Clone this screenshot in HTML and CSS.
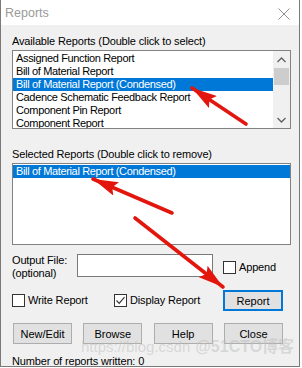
FILE: index.html
```html
<!DOCTYPE html>
<html lang="en">
<head>
  <meta charset="UTF-8" />
  <title>Reports</title>
  <link rel="stylesheet" href="styles.css">
</head>
<body>
  <div class="window">
    <div class="titlebar">
      <span class="title">Reports</span>
      <svg class="close" width="12" height="12" viewBox="0 0 12 12">
        <path d="M0.5 0.5 L11.5 11.5 M11.5 0.5 L0.5 11.5" stroke="#8c8c8c" stroke-width="1" fill="none"/>
      </svg>
    </div>

    <div class="content">
      <div class="label label-first">Available Reports (Double click to select)</div>
      <div class="listbox list-available">
        <ul class="items">
          <li>Assigned Function Report</li>
          <li>Bill of Material Report</li>
          <li class="selected">Bill of Material Report (Condensed)</li>
          <li>Cadence Schematic Feedback Report</li>
          <li>Component Pin Report</li>
          <li>Component Report</li>
        </ul>
        <div class="scrollbar">
          <svg class="arrow-up" width="9" height="6" viewBox="0 0 9 6">
            <path d="M0.5 5 L4.5 1 L8.5 5" stroke="#606060" stroke-width="1.3" fill="none"/>
          </svg>
          <div class="thumb"></div>
          <svg class="arrow-down" width="9" height="6" viewBox="0 0 9 6">
            <path d="M0.5 1 L4.5 5 L8.5 1" stroke="#606060" stroke-width="1.3" fill="none"/>
          </svg>
        </div>
      </div>

      <div class="label label-second">Selected Reports (Double click to remove)</div>
      <div class="listbox list-selected">
        <ul class="items">
          <li class="selected">Bill of Material Report (Condensed)</li>
        </ul>
      </div>

      <div class="output-row">
        <div class="output-label">Output File:<br>(optional)</div>
        <div class="textbox"></div>
        <label class="check check-append"><span class="box"></span>Append</label>
      </div>

      <div class="options-row">
        <label class="check"><span class="box"></span>Write Report</label>
        <label class="check">
          <span class="box">
            <svg width="11" height="11" viewBox="0 0 11 11">
              <path d="M1.5 5.5 L4.2 8.3 L9.5 2.2" stroke="#333" stroke-width="1.2" fill="none"/>
            </svg>
          </span>Display Report</label>
        <button class="btn btn-default">Report</button>
      </div>

      <div class="buttons-row">
        <button class="btn">New/Edit</button>
        <button class="btn">Browse</button>
        <button class="btn">Help</button>
        <button class="btn">Close</button>
      </div>

      <div class="status">Number of reports written: 0</div>
    </div>

    <div class="watermark"><span class="wm-url">https://blog.csdn</span><span class="wm-site">@51CTO博客</span></div>

    <!-- red pointers drawn over the dialog -->
    <svg class="pointers" width="302" height="368" viewBox="0 0 302 368">
      <defs>
        <marker id="head" markerWidth="7" markerHeight="4" refX="7" refY="2" orient="auto" markerUnits="strokeWidth">
          <path d="M0 0 L7 2 L0 4 L1.2 2 Z" fill="#e3160e"/>
        </marker>
      </defs>
      <g stroke="#e3160e" stroke-width="3.6" stroke-linecap="round" fill="none" marker-end="url(#head)">
        <line x1="246" y1="124" x2="192" y2="88"/>
        <line x1="172" y1="213" x2="93" y2="179"/>
        <line x1="135" y1="218" x2="223" y2="287"/>
      </g>
    </svg>
  </div>
</body>
</html>
```

FILE: styles.css
```css
body {
  margin: 0;
  background-color: #ffffff;
}

.window {
  position: relative;
  width: 300px;
  height: 367px;
  box-sizing: border-box;
  background-color: #f0f0f0;
  border: 1px solid #7a7a7a;
  border-top: none;
  font-family: "Liberation Sans", Arial, sans-serif;
  font-size: 11px;
  color: #000;
  overflow: hidden;
}

.titlebar {
  height: 25px;
  background-color: #fff;
  display: flex;
  align-items: center;
  justify-content: space-between;
  padding: 0 9px 0 4px;
}

.title {
  color: #9a9a9a;
  font-size: 12.5px;
}

.close {
  margin-top: 2px;
}

.content {
  padding-left: 11px;
}

.label {
  line-height: 13px;
  letter-spacing: -0.15px;
}

.label-first {
  margin-top: 10px;
}

.label-second {
  margin-top: 19px;
}

.listbox {
  width: 279px;
  box-sizing: border-box;
  border: 1px solid #828282;
  background-color: #fff;
  margin-top: 2px;
  display: flex;
  overflow: hidden;
}

.list-available {
  height: 79px;
}

.list-selected {
  height: 82px;
}

.items {
  list-style: none;
  margin: 0;
  padding: 1px 0 0 0;
  flex: 1;
}

.items li {
  height: 13px;
  line-height: 13px;
  padding-left: 3px;
  letter-spacing: -0.35px;
  white-space: nowrap;
}

.items li.selected {
  background-color: #0078d7;
  color: #fff;
}

.scrollbar {
  width: 17px;
  background-color: #f0f0f0;
  display: flex;
  flex-direction: column;
  align-items: center;
}

.arrow-up {
  margin-top: 6px;
}

.thumb {
  width: 15px;
  height: 17px;
  background-color: #cdcdcd;
  margin-top: 5px;
}

.arrow-down {
  margin-top: auto;
  margin-bottom: 5px;
}

.output-row {
  display: grid;
  grid-template-columns: 65px 136px auto;
  align-items: start;
  margin-top: 9px;
}

.output-label {
  line-height: 13px;
  letter-spacing: -0.15px;
}

.textbox {
  height: 23px;
  box-sizing: border-box;
  border: 1px solid #7a7a7a;
  background-color: #fff;
}

.check {
  display: flex;
  align-items: center;
  line-height: 13px;
  letter-spacing: -0.15px;
}

.check-append {
  margin-left: 10px;
  margin-top: 7px;
}

.box {
  width: 13px;
  height: 13px;
  box-sizing: border-box;
  border: 1px solid #333;
  background-color: #fff;
  margin-right: 3px;
  display: flex;
  align-items: center;
  justify-content: center;
}

.options-row {
  display: grid;
  grid-template-columns: 102px 109px 60px;
  align-items: center;
  margin-top: 10px;
}

.btn {
  height: 21px;
  width: 59px;
  padding: 0;
  box-sizing: border-box;
  border: 1px solid #adadad;
  background-color: #e1e1e1;
  font-family: "Liberation Sans", Arial, sans-serif;
  font-size: 11px;
  color: #000;
}

.btn-default {
  width: 60px;
  border: 2px solid #0078d7;
}

.buttons-row {
  width: 270px;
  margin-left: 1px;
  margin-top: 12px;
  display: flex;
  justify-content: space-between;
}

.status {
  margin-top: 11px;
  line-height: 13px;
  letter-spacing: -0.15px;
}

.watermark {
  position: absolute;
  left: 80px;
  top: 342px;
  height: 10px;
  display: flex;
  align-items: center;
  gap: 5px;
  color: rgba(190, 190, 190, 0.5);
  font-family: "Liberation Sans", "Noto Sans CJK SC", sans-serif;
  line-height: 10px;
  white-space: nowrap;
}

.wm-url {
  font-size: 15px;
}

.wm-site {
  font-size: 16px;
  font-weight: bold;
}

.pointers {
  position: absolute;
  left: -1px;
  top: 0;
}
```
